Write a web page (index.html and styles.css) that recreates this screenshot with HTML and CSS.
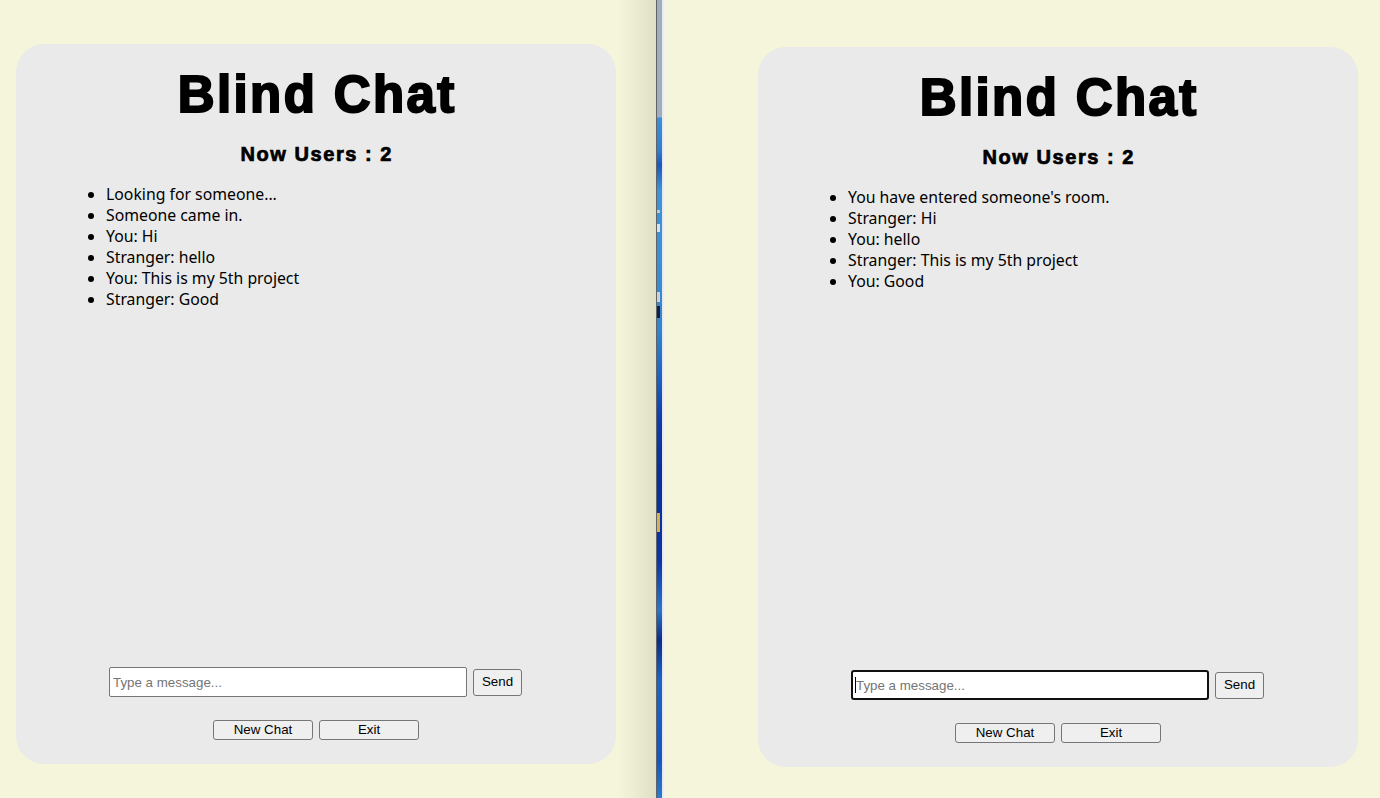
FILE: index.html
```html
<!DOCTYPE html>
<html lang="en">
<head>
<meta charset="utf-8">
<title>Blind Chat</title>
<link rel="stylesheet" href="styles.css">
</head>
<body>
<div class="pane pane-left">
  <div class="card">
    <h1 class="title">Blind Chat</h1>
    <h2 class="users">Now Users : 2</h2>
    <ul class="messages">
      <li>Looking for someone...</li>
      <li>Someone came in.</li>
      <li>You: Hi</li>
      <li>Stranger: hello</li>
      <li>You: This is my 5th project</li>
      <li>Stranger: Good</li>
    </ul>
    <div class="composer">
      <span class="field"><input class="msg" type="text" placeholder="Type a message..."></span>
      <button class="btn send">Send</button>
    </div>
    <div class="actions">
      <button class="btn action">New Chat</button>
      <button class="btn action">Exit</button>
    </div>
  </div>
</div>
<div class="divider"></div>
<div class="desk"></div>
<div class="edge"></div>
<div class="pane pane-right">
  <div class="card">
    <h1 class="title">Blind Chat</h1>
    <h2 class="users">Now Users : 2</h2>
    <ul class="messages">
      <li>You have entered someone's room.</li>
      <li>Stranger: Hi</li>
      <li>You: hello</li>
      <li>Stranger: This is my 5th project</li>
      <li>You: Good</li>
    </ul>
    <div class="composer">
      <span class="field"><input class="msg focused" type="text" placeholder="Type a message..."><span class="caret"></span></span>
      <button class="btn send">Send</button>
    </div>
    <div class="actions">
      <button class="btn action">New Chat</button>
      <button class="btn action">Exit</button>
    </div>
  </div>
</div>
</body>
</html>
```
FILE: styles.css
```css
html, body {
  margin: 0;
  padding: 0;
}
body {
  width: 1380px;
  height: 798px;
  overflow: hidden;
  display: flex;
  background: #f5f5dc;
  font-family: "Liberation Sans", Arial, sans-serif;
}
.pane {
  box-sizing: border-box;
  height: 798px;
}
.pane-left {
  width: 656px;
  flex: none;
  padding: 44px 0 0 16px;
  background: linear-gradient(to right, rgba(0,0,0,0) 0, rgba(0,0,0,0) 618px, rgba(60,60,30,0.05) 636px, rgba(60,60,30,0.12) 656px), #f5f5dc;
}
.divider {
  width: 1px;
  flex: none;
  background: #5f6368;
}
.desk {
  width: 5px;
  flex: none;
  background:
    linear-gradient(#d8b050, #d8b050) 0 513px / 3px 19px no-repeat,
    linear-gradient(#c8c8c8, #c8c8c8) 0 210px / 3px 3px no-repeat,
    linear-gradient(#e0e0e0, #e0e0e0) 0 224px / 3px 8px no-repeat,
    linear-gradient(#d0d0d0, #d0d0d0) 0 292px / 3px 10px no-repeat,
    linear-gradient(#102040, #102040) 0 306px / 3px 12px no-repeat,
    linear-gradient(to bottom, #9eaebd 0, #9eaebd 117px, #3a8fd8 118px, #2f80d0 150px, #1a55c0 165px, #3b95d8 190px, #3a90d6 260px, #2f86d0 330px, #1a60c4 380px, #0b3cae 420px, #07309c 470px, #0a34a8 560px, #2a76cc 610px, #0c2c8a 640px, #1b64c8 680px, #1256c2 760px, #2a7ccc 798px);
}
.edge {
  width: 3px;
  flex: none;
  background: linear-gradient(to right, #e4e4e4, #f6f6f6);
}
.pane-right {
  flex: 1;
  padding: 47px 0 0 93px;
}
.card {
  box-sizing: border-box;
  width: 600px;
  height: 720px;
  background: #eaeaea;
  border-radius: 28px;
  padding: 0 50px 24px;
  display: flex;
  flex-direction: column;
}
.title {
  margin: 21px 0 0;
  font-size: 51px;
  line-height: 60px;
  font-weight: bold;
  text-align: center;
  letter-spacing: 2.4px;
  padding-left: 2.4px;
  -webkit-text-stroke: 2px #000;
  color: #000;
}
.users {
  margin: 17px 0 0;
  font-size: 20px;
  line-height: 24px;
  font-weight: bold;
  text-align: center;
  letter-spacing: 1.55px;
  padding-left: 1.55px;
  -webkit-text-stroke: 0.7px #000;
  color: #000;
}
.messages {
  flex: 1;
  margin: 18px 0 0;
  padding-left: 40px;
  font-family: "Noto Sans", sans-serif;
  font-size: 15.8px;
  line-height: 21px;
  color: #000;
}
.composer {
  display: flex;
  justify-content: center;
  align-items: center;
  gap: 6px;
  padding-right: 1px;
}
.field {
  position: relative;
  display: block;
}
.msg {
  display: block;
  box-sizing: border-box;
  width: 358px;
  height: 30px;
  margin: 0;
  border: 1px solid #767676;
  border-radius: 2px;
  padding: 1px 3px;
  background: #fff;
  font-family: "Liberation Sans", Arial, sans-serif;
  font-size: 13.33px;
  color: #000;
  outline: none;
}
.msg::placeholder {
  color: #757575;
}
.msg.focused {
  border: 2px solid #101010;
  border-radius: 3px;
  padding: 1px 3px;
}
.caret {
  position: absolute;
  left: 4px;
  top: 7px;
  width: 1px;
  height: 16px;
  background: #000;
}
.btn {
  box-sizing: border-box;
  margin: 0;
  padding: 0;
  background: #efefef;
  border: 1px solid #767676;
  border-radius: 3px;
  font-family: "Liberation Sans", Arial, sans-serif;
  font-size: 13.33px;
  color: #000;
  line-height: 1;
}
.send {
  width: 49px;
  height: 27px;
}
.actions {
  margin-top: 23px;
  display: flex;
  justify-content: center;
  gap: 6px;
}
.action {
  width: 100px;
  height: 20px;
}
```
